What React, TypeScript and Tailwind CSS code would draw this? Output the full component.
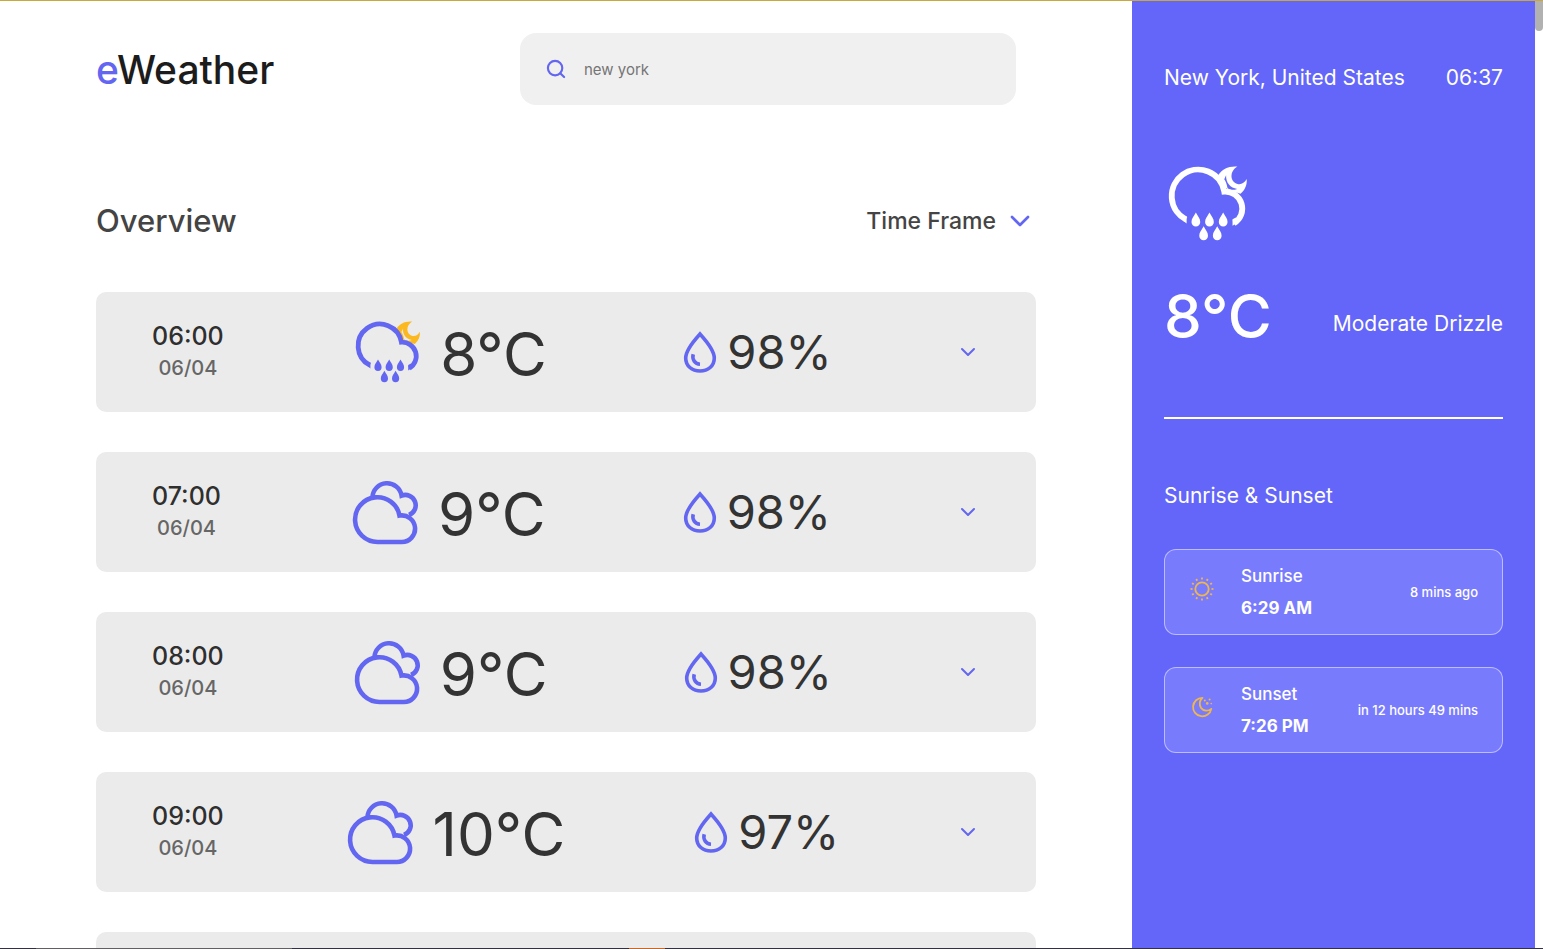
import { ChevronDown, Search } from "lucide-react";

type Kind = "drizzle" | "cloudy";

type Hour = { time: string; date: string; temp: string; humidity: string; kind: Kind };

const hours: Hour[] = [
  { time: "06:00", date: "06/04", temp: "8°C", humidity: "98%", kind: "drizzle" },
  { time: "07:00", date: "06/04", temp: "9°C", humidity: "98%", kind: "cloudy" },
  { time: "08:00", date: "06/04", temp: "9°C", humidity: "98%", kind: "cloudy" },
  { time: "09:00", date: "06/04", temp: "10°C", humidity: "97%", kind: "cloudy" },
];

const drops = [
  [36, 58.5],
  [47.2, 58.5],
  [58.5, 58.5],
  [42.4, 69.8],
  [53.6, 69.8],
];

function DrizzleIcon({ className, moon }: { className: string; moon: string }) {
  return (
    <svg viewBox="10 16 72 70" className={className} fill="none" aria-hidden="true">
      <path
        fillRule="evenodd"
        d="M54.5 27.6C57.5 22.8 63 20 70.2 20.6C63.5 24.5 64 33.4 70.4 34.9C73.4 35.6 76 34 77.9 30.8C78.3 35.5 76.5 39.8 72.8 43L66 41L60 38L56 31ZM60.9 27.8C60.6 34 64.5 38.4 70 39C67 40.2 63.6 40 62 38C61.6 35 60.4 32.4 59.4 31Z"
        className={moon}
      />
      <path
        d="M27.8 64.2A21.8 21.8 0 1 1 59.4 41.2A14 14 0 0 1 67.4 67.2"
        stroke="currentColor"
        strokeWidth="4.8"
      />
      <path d="M26 61.5H28.4V67.5L26 65.6ZM66.2 64V69.4L70 67L69 62.6Z" fill="currentColor" />
      {drops.map(([x, y]) => (
        <path
          key={`${x}-${y}`}
          transform={`translate(${x} ${y})`}
          d="M0 0C-1.8 3.2-3.6 5-3.6 7.8A3.6 3.6 0 0 0 3.6 7.8C3.6 5 1.8 3.2 0 0Z"
          fill="currentColor"
        />
      ))}
    </svg>
  );
}

function CloudyIcon({ className }: { className: string }) {
  return (
    <svg
      viewBox="10 16 72 70"
      className={className}
      fill="none"
      stroke="currentColor"
      strokeWidth="4.6"
      aria-hidden="true"
    >
      <path d="M37.5 81A22.4 22.4 0 1 1 59.5 54.6A13.3 13.3 0 1 1 61.5 81Z" />
      <path d="M32.4 36.5A14.7 14.7 0 0 1 61.6 34.6A10.3 10.3 0 1 1 69 54" />
    </svg>
  );
}

function DropletIcon() {
  return (
    <svg
      viewBox="0 0 34 44"
      className="h-11 w-[34px]"
      fill="none"
      stroke="currentColor"
      strokeWidth="3.6"
      aria-hidden="true"
    >
      <path d="M17 4C12 9.5 2.7 19.5 2.7 28C2.7 36 9 41 17 41S31.3 36 31.3 28C31.3 19.5 22 9.5 17 4Z" />
      <path d="M10.2 24.3C8.8 29.5 12 34 17 34.2" />
    </svg>
  );
}

function SunIcon() {
  return (
    <svg viewBox="0 0 26 26" className="size-[26px]" fill="none" aria-hidden="true">
      <circle cx="13" cy="13" r="6.7" stroke="currentColor" strokeWidth="1.8" />
      <g stroke="currentColor" strokeWidth="1.8">
        {Array.from({ length: 12 }, (_, i) => (
          <path key={i} d="M13 1.5V3.5" transform={`rotate(${i * 30} 13 13)`} />
        ))}
      </g>
    </svg>
  );
}

function MoonIcon() {
  return (
    <svg viewBox="0 0 26 26" className="size-[26px]" fill="none" aria-hidden="true">
      <path
        d="M13.5 3.9A9.2 9.2 0 1 0 22.3 14.8C19.2 17.6 14.6 17.2 12.2 14.1C9.8 10.8 10.4 6.4 13.5 3.9Z"
        stroke="currentColor"
        strokeWidth="1.8"
        strokeLinejoin="round"
      />
      <g fill="currentColor">
        <circle cx="15.8" cy="6.4" r="1" />
        <circle cx="20.6" cy="5.6" r="1" />
        <circle cx="18.2" cy="9.4" r="1.3" />
        <circle cx="22.2" cy="9.6" r="0.8" />
      </g>
    </svg>
  );
}

function HourCard({ hour }: { hour: Hour }) {
  return (
    <li className="flex h-30 shrink-0 items-center justify-between rounded-[10px] bg-[#ebebeb] pr-15 pl-14">
      <div className="flex flex-col items-center font-medium">
        <span className="text-[25px] leading-8 text-[#2f2f2f]">{hour.time}</span>
        <span className="text-xl leading-8 text-[#666]">{hour.date}</span>
      </div>
      <div className="flex items-center gap-4 pr-2 text-[#6366f1]">
        {hour.kind === "drizzle" ? (
          <DrizzleIcon className="h-[70px] w-[72px]" moon="fill-[#fbb91f]" />
        ) : (
          <CloudyIcon className="h-[70px] w-[72px]" />
        )}
        <span className="pt-1 text-[60px] leading-16 text-[#333]">{hour.temp}</span>
      </div>
      <div className="flex items-center gap-2.5 text-[#6366f1]">
        <DropletIcon />
        <span className="text-[47px] leading-16 text-[#333]">{hour.humidity}</span>
      </div>
      <button
        type="button"
        aria-label={`Details for ${hour.time}`}
        className="flex w-4 justify-center text-[#6366f1]"
      >
        <ChevronDown className="size-6 shrink-0" strokeWidth={2} />
      </button>
    </li>
  );
}

function SunCard({
  icon,
  label,
  time,
  note,
}: {
  icon: React.ReactNode;
  label: string;
  time: string;
  note: string;
}) {
  return (
    <li className="flex h-[86px] items-center rounded-xl border border-white/50 bg-[#797bfd] px-6">
      <div className="mb-1.5 text-[#efb64c]">{icon}</div>
      <div className="ml-[26px] flex flex-col">
        <span className="text-[17px] leading-8 font-medium">{label}</span>
        <span className="text-[17px] leading-8 font-bold">{time}</span>
      </div>
      <span className="ml-auto pt-0.5 text-[13px] font-medium">{note}</span>
    </li>
  );
}

export default function App() {
  return (
    <div className="flex h-screen flex-col overflow-hidden bg-white font-['Inter',sans-serif]">
      <div className="h-px shrink-0 bg-[#c9a83c]" />
      <div className="flex min-h-0 flex-1">
        <main className="flex min-w-0 flex-1 flex-col overflow-y-auto px-24 pt-8 [scrollbar-width:none]">
          <header className="flex shrink-0 items-center justify-between pr-5">
            <h1 className="pt-0.5 text-[39px] font-medium text-[#1c1c1c]">
              <span className="text-[#6366f1]">e</span>Weather
            </h1>
            <label className="flex h-18 w-[496px] items-center gap-4 rounded-2xl bg-[#f0f0f0] px-6">
              <Search className="size-6 scale-90 text-[#6366f1]" strokeWidth={2.4} />
              <input
                type="text"
                aria-label="Search city"
                placeholder="new york"
                className="min-w-0 flex-1 bg-transparent pt-0.5 text-[15px] text-[#757575] outline-none placeholder:text-[#757575]"
              />
            </label>
          </header>

          <section className="mt-24 flex flex-col">
            <div className="flex items-center justify-between">
              <h2 className="text-[31px] leading-10 font-medium text-[#444]">Overview</h2>
              <button
                type="button"
                className="flex items-center gap-2 text-[23px] font-medium text-[#444]"
              >
                Time Frame
                <ChevronDown className="size-8 text-[#6366f1]" strokeWidth={2} />
              </button>
            </div>
            <ul className="mt-[51px] flex flex-col gap-10">
              {hours.map((hour) => (
                <HourCard key={hour.time} hour={hour} />
              ))}
              <li aria-hidden="true" className="h-30 shrink-0 rounded-[10px] bg-[#ebebeb]" />
            </ul>
          </section>
        </main>

        <aside className="w-[403px] shrink-0 bg-[#6366f8] px-8 pt-[61px] text-white">
          <div className="flex items-center justify-between text-[21px] leading-8">
            <span>New York, United States</span>
            <span>06:37</span>
          </div>
          <DrizzleIcon className="mt-[67px] h-[85px] w-[88px]" moon="fill-white" />
          <div className="mt-[38px] flex items-center justify-between">
            <span className="text-[60px] leading-16 font-medium">8°C</span>
            <span className="pt-4 text-[21px] leading-8">Moderate Drizzle</span>
          </div>
          <hr className="mt-[69px] border-t-2 border-white" />
          <h2 className="mt-[61px] text-[21px] leading-8">Sunrise &amp; Sunset</h2>
          <ul className="mt-[37px] flex flex-col gap-8">
            <SunCard icon={<SunIcon />} label="Sunrise" time="6:29 AM" note="8 mins ago" />
            <SunCard icon={<MoonIcon />} label="Sunset" time="7:26 PM" note="in 12 hours 49 mins" />
          </ul>
        </aside>

        <div className="w-2 shrink-0 bg-white">
          <div className="h-[30px] rounded-b-full bg-[#b1b1b1]" />
        </div>
      </div>
      <div className="flex h-px shrink-0 bg-[#33303f]">
        <div className="ml-9 w-64 bg-[#625f63]" />
        <div className="ml-[337px] w-9 bg-[#c0692d]" />
      </div>
    </div>
  );
}
